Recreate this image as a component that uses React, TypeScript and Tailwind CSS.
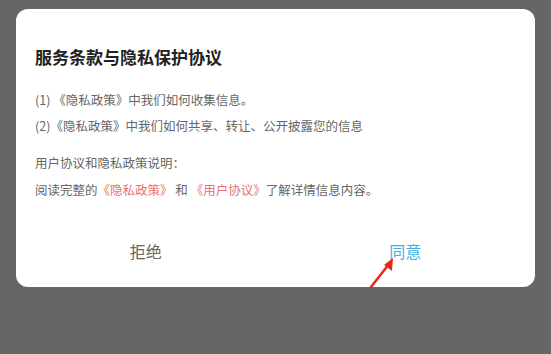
import React from "react";

const FONT = { fontFamily: '"Noto Sans CJK SC", "Noto Sans", sans-serif' };

function PointerArrow() {
  // red annotation arrow pointing at the agree button
  return (
    <svg
      className="absolute left-[360px] top-[250px] pointer-events-none"
      width="40"
      height="40"
      viewBox="0 0 40 40"
    >
      <line x1="11" y1="37" x2="29" y2="14" stroke="#e8271c" strokeWidth="2.5" strokeLinecap="round" />
      <polygon points="33,8 32,21 24,15" fill="#e8271c" />
    </svg>
  );
}

const App: React.FC = () => {
  return (
    <div className="relative w-[551px] h-[354px] bg-[#666666] pt-[9px] px-4" style={FONT}>
      <div className="bg-white rounded-xl h-[278px] flex flex-col">
        <div className="px-[19px] pt-[30px]">
          <h2 className="text-[17px] font-bold text-[#222] leading-[36px]">
            服务条款与隐私保护协议
          </h2>
          <div className="mt-[12px] text-[12.5px] text-[#666] leading-[26px]">
            <p>(1) 《隐私政策》中我们如何收集信息。</p>
            <p>(2)《隐私政策》中我们如何共享、转让、公开披露您的信息</p>
          </div>
          <div className="mt-[10px] text-[12.5px] text-[#666] leading-[27px]">
            <p>用户协议和隐私政策说明：</p>
            <p>
              阅读完整的<span className="text-[#e57373]">《隐私政策》</span> 和{" "}
              <span className="text-[#e57373]">《用户协议》</span>了解详情信息内容。
            </p>
          </div>
        </div>
        <div className="flex mt-auto mb-[24px]">
          <button type="button" className="flex-1 text-[16px] text-[#666] leading-[24px]">
            拒绝
          </button>
          <button type="button" className="flex-1 text-[16px] text-[#3db2e3] leading-[24px]">
            同意
          </button>
        </div>
      </div>
      <PointerArrow />
    </div>
  );
};

export default App;
